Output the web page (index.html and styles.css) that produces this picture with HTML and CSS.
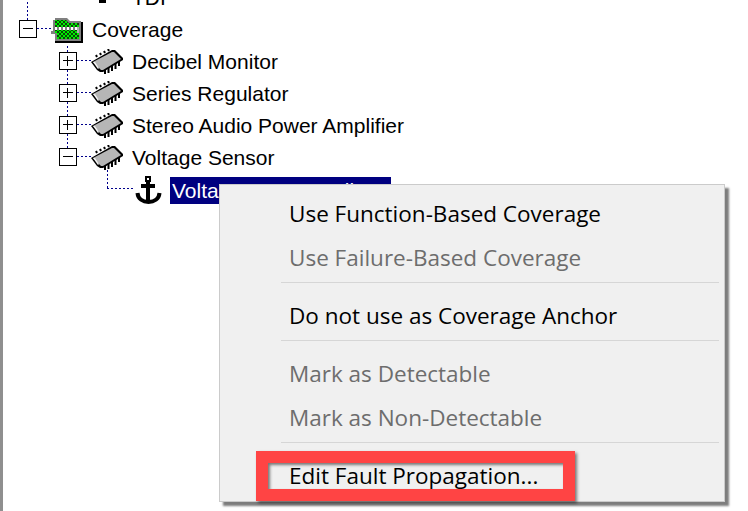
FILE: index.html
```html
<!DOCTYPE html>
<html lang="en">
<head>
  <meta charset="UTF-8" />
  <title>Coverage tree</title>
  <link rel="stylesheet" href="styles.css">
</head>
<body>
  <svg class="defs" width="0" height="0">
    <defs>
      <pattern id="checker" width="4" height="4" patternUnits="userSpaceOnUse">
        <rect width="4" height="4" fill="#00ec00"/>
        <rect width="2" height="2" fill="#064a06"/>
        <rect x="2" y="2" width="2" height="2" fill="#064a06"/>
      </pattern>
      <symbol id="chip" viewBox="0 0 32 26">
        <g stroke="#000" stroke-width="2" fill="none">
          <path d="M6 8 5 6M10 6 9 4M14 4 13 2M18 2 17 0"/>
          <path d="M14 19v6M17.500 17v7M21 15v7M24.500 13v7M28 11v6"/>
        </g>
        <path fill="#000" d="M0 13 21 1h3l8 8v2L12 23H9l-3-2z"/>
        <path fill="#b6b6b6" d="M2 13 21 3h2l7 7-18 11h-2z"/>
        <path fill="#f4f4f4" d="M2 13h2l4 6-1 1z"/>
      </symbol>
      <symbol id="folder" viewBox="0 0 32 26">
        <path fill="#000" d="M4 23h28v3H4zM30 5h2v21h-2z"/>
        <path fill="#808080" d="M2 11V3h2V1h12l3 3h11v20H4v-7H0v-3h2z"/>
        <path fill="url(#checker)" d="M4 10V3h11l3 3h10v4zM6 16h22v6H6z"/>
        <path fill="url(#checker)" d="M4 13h22v3H4z"/>
        <path fill="#fff" d="M4 10h2v3H4zM8 10h2v3H8zM12 10h2v3h-2zM16 10h2v3h-2zM20 10h2v3h-2zM24 10h2v3h-2z"/>
        <path fill="#b0b0b0" d="M26 10h2v6h-2z"/>
      </symbol>
      <symbol id="anchor" viewBox="0 0 27 28">
        <path fill="#000" fill-rule="evenodd" d="M10 0h6v6h-1v2h5v4h-5v14h-4V12H6V8h5V6h-1zM12 2v2h2V2z"/>
        <path fill="none" stroke="#000" stroke-width="4" d="M2.500 17C3 23 8 26 13.500 26S24 23 24.500 17"/>
      </symbol>
    </defs>
  </svg>

  <div class="window">
    <div class="tree">
      <div class="row">
        <span class="gutter line-full"></span>
        <span class="top-icon"></span>
        <span class="label top-label">TDI</span>
      </div>
      <div class="row">
        <span class="exp line-top"><i class="box minus"></i></span>
        <span class="stub"></span>
        <svg class="folder"><use href="#folder"/></svg>
        <span class="label">Coverage</span>
      </div>
      <div class="row sub">
        <span class="exp line-full"><i class="box plus"></i></span>
        <span class="stub"></span>
        <svg class="chip"><use href="#chip"/></svg>
        <span class="label">Decibel Monitor</span>
      </div>
      <div class="row sub">
        <span class="exp line-full"><i class="box plus"></i></span>
        <span class="stub"></span>
        <svg class="chip"><use href="#chip"/></svg>
        <span class="label">Series Regulator</span>
      </div>
      <div class="row sub">
        <span class="exp line-full"><i class="box plus"></i></span>
        <span class="stub"></span>
        <svg class="chip"><use href="#chip"/></svg>
        <span class="label">Stereo Audio Power Amplifier</span>
      </div>
      <div class="row sub">
        <span class="exp line-top"><i class="box minus"></i></span>
        <span class="stub"></span>
        <svg class="chip"><use href="#chip"/></svg>
        <span class="label">Voltage Sensor</span>
      </div>
      <div class="row leaf">
        <span class="elbow"></span>
        <svg class="anchor"><use href="#anchor"/></svg>
        <span class="label selected">Voltage Sensor Failure</span>
      </div>
    </div>

    <div class="menu">
      <div class="item">Use Function-Based Coverage</div>
      <div class="item off">Use Failure-Based Coverage</div>
      <div class="sep"></div>
      <div class="item">Do not use as Coverage Anchor</div>
      <div class="sep"></div>
      <div class="item off">Mark as Detectable</div>
      <div class="item off">Mark as Non-Detectable</div>
      <div class="sep"></div>
      <div class="item">Edit Fault Propagation...</div>
    </div>
    <div class="callout"></div>
  </div>
</body>
</html>
```

FILE: styles.css
```css
html, body {
  margin: 0;
  height: 100%;
  overflow: hidden;
  background: #fff;
}
.defs {
  display: block;
  height: 0;
}
.window {
  height: 511px;
  border-left: 3px solid #8f8f8f;
  box-sizing: border-box;
  overflow: hidden;
}
.tree {
  margin-top: -18px;
  padding-left: 16px;
  font-family: "Liberation Sans", Arial, sans-serif;
  font-size: 21px;
  color: #000;
}
.row {
  display: flex;
  align-items: center;
  height: 32px;
}
.sub {
  padding-left: 40px;
}
.gutter, .exp {
  flex: none;
  display: flex;
  align-items: center;
  justify-content: center;
  width: 18px;
  height: 32px;
}
.gutter {
  width: 80px;
  justify-content: flex-start;
}
.line-full, .line-top {
  background-image: repeating-linear-gradient(to bottom, #00008b 0 2px, transparent 2px 4px);
  background-repeat: no-repeat;
  background-position: 8px 0;
  background-size: 1px 100%;
}
.line-top {
  background-size: 1px 12px;
}
.sub .line-top {
  background-size: 1px 16px;
}
.box {
  display: block;
  position: relative;
  width: 16px;
  height: 16px;
  margin-bottom: 3px;
  border: 1px solid #000;
  background: #fff;
}
.box::before {
  content: "";
  position: absolute;
  left: 3px;
  right: 3px;
  top: 7px;
  height: 1px;
  background: #000;
}
.plus::after {
  content: "";
  position: absolute;
  top: 3px;
  bottom: 3px;
  left: 7px;
  width: 1px;
  background: #000;
}
.stub {
  flex: none;
  width: 14px;
  height: 1px;
  margin-bottom: 4px;
  background-image: repeating-linear-gradient(to right, #00008b 0 2px, transparent 2px 4px);
}
.top-icon {
  flex: none;
  width: 7px;
  height: 5px;
  margin-top: 5px;
  background: #000;
}
.top-label {
  margin-left: 26px;
}
.folder {
  flex: none;
  width: 32px;
  height: 26px;
  margin-right: 9px;
}
.chip {
  flex: none;
  width: 32px;
  height: 26px;
  margin-right: 9px;
}
.leaf {
  padding-left: 88px;
}
.elbow {
  flex: none;
  align-self: flex-start;
  width: 28px;
  height: 20px;
  margin-top: -4px;
  background-image:
    repeating-linear-gradient(to bottom, #00008b 0 2px, transparent 2px 4px),
    repeating-linear-gradient(to right, #00008b 0 2px, transparent 2px 4px);
  background-repeat: no-repeat;
  background-position: 0 0, 0 18px;
  background-size: 1px 100%, 100% 1px;
}
.anchor {
  flex: none;
  width: 27px;
  height: 28px;
  margin-right: 8px;
}
.selected {
  background: #000080;
  color: #fff;
  height: 27px;
  line-height: 27px;
  padding: 0 2px;
  width: 217px;
  white-space: nowrap;
  overflow: hidden;
}
.menu {
  position: absolute;
  left: 219px;
  top: 184px;
  width: 506px;
  height: 318px;
  padding-top: 7px;
  box-sizing: border-box;
  background: #f0f0f0;
  border: 1px solid #cbcbcb;
  box-shadow: 4px 4px 2px #7d7d7d;
  font-family: "Open Sans", "Noto Sans", sans-serif;
  font-size: 22.5px;
  color: #000;
}
.item {
  height: 44px;
  line-height: 44px;
  padding-left: 69px;
}
.off {
  color: #6d6d6d;
}
.sep {
  height: 1px;
  margin: 2px 5px 11px 61px;
  background: #d6d6d6;
}
.callout {
  position: absolute;
  left: 256px;
  top: 451px;
  width: 319px;
  height: 50px;
  box-sizing: border-box;
  border: 12px solid #ff4444;
  box-shadow: 2px 2px 3px rgba(0, 0, 0, 0.5), inset 2px 2px 3px rgba(0, 0, 0, 0.5);
}
```
